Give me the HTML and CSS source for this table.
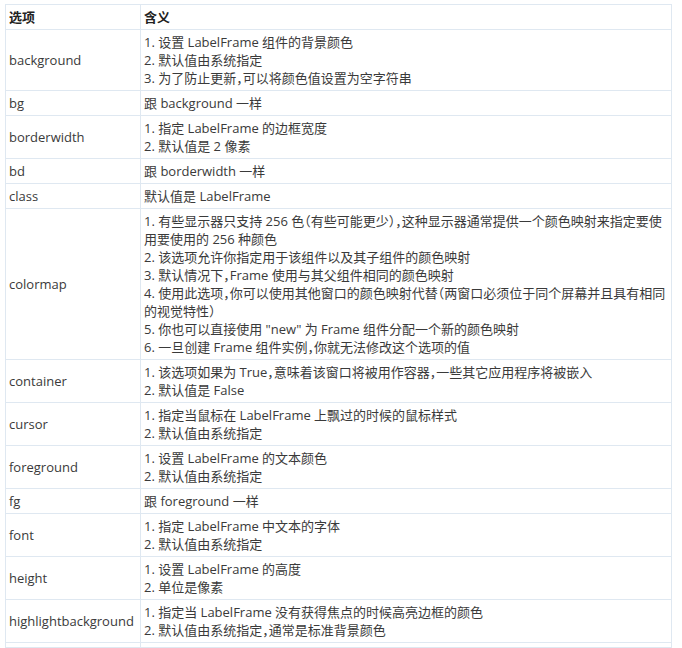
FILE: index.html
```html
<!DOCTYPE html>
<html lang="zh-CN">
<head>
<meta charset="utf-8">
<title>LabelFrame 选项</title>
<link rel="stylesheet" href="styles.css">
</head>
<body>
<div class="wrap">
<table class="opts">
  <thead>
    <tr><th class="c1">选项</th><th class="c2">含义</th></tr>
  </thead>
  <tbody>
    <tr><td>background</td><td>1. 设置 LabelFrame 组件的背景颜色<br>2. 默认值由系统指定<br>3. 为了防止更新，可以将颜色值设置为空字符串</td></tr>
    <tr><td>bg</td><td>跟 background 一样</td></tr>
    <tr><td>borderwidth</td><td>1. 指定 LabelFrame 的边框宽度<br>2. 默认值是 2 像素</td></tr>
    <tr><td>bd</td><td>跟 borderwidth 一样</td></tr>
    <tr><td>class</td><td>默认值是 LabelFrame</td></tr>
    <tr><td>colormap</td><td>1. 有些显示器只支持 256 色（有些可能更少），这种显示器通常提供一个颜色映射来指定要使<br>用要使用的 256 种颜色<br>2. 该选项允许你指定用于该组件以及其子组件的颜色映射<br>3. 默认情况下，Frame 使用与其父组件相同的颜色映射<br>4. 使用此选项，你可以使用其他窗口的颜色映射代替（两窗口必须位于同个屏幕并且具有相同<br>的视觉特性）<br>5. 你也可以直接使用 "new" 为 Frame 组件分配一个新的颜色映射<br>6. 一旦创建 Frame 组件实例，你就无法修改这个选项的值</td></tr>
    <tr><td>container</td><td>1. 该选项如果为 True，意味着该窗口将被用作容器，一些其它应用程序将被嵌入<br>2. 默认值是 False</td></tr>
    <tr><td>cursor</td><td>1. 指定当鼠标在 LabelFrame 上飘过的时候的鼠标样式<br>2. 默认值由系统指定</td></tr>
    <tr><td>foreground</td><td>1. 设置 LabelFrame 的文本颜色<br>2. 默认值由系统指定</td></tr>
    <tr><td>fg</td><td>跟 foreground 一样</td></tr>
    <tr><td>font</td><td>1. 指定 LabelFrame 中文本的字体<br>2. 默认值由系统指定</td></tr>
    <tr><td>height</td><td>1. 设置 LabelFrame 的高度<br>2. 单位是像素</td></tr>
    <tr><td>highlightbackground</td><td>1. 指定当 LabelFrame 没有获得焦点的时候高亮边框的颜色<br>2. 默认值由系统指定，通常是标准背景颜色</td></tr>
    <tr class="blank"><td></td><td></td></tr>
  </tbody>
</table>
</div>
</body>
</html>
```

FILE: styles.css
```css
html {
  overflow: hidden;
  background: #ffffff;
}
body {
  margin: 0;
  font-family: "Open Sans", "Noto Sans CJK SC", sans-serif;
  font-size: 13px;
  line-height: 18px;
  color: #3a3a3a;
  font-feature-settings: "halt" 1;
}
.wrap {
  padding: 4px 0 0 5px;
}
.opts {
  border-collapse: collapse;
  width: 667px;
  table-layout: fixed;
}
.opts th,
.opts td {
  border: 1px solid #dfe8f1;
  padding: 3px;
  text-align: left;
  vertical-align: middle;
  white-space: nowrap;
  overflow: hidden;
}
.opts th {
  font-weight: bold;
  color: #222222;
}
.opts .c1 {
  width: 128px;
}
.opts .blank td {
  height: 0;
  padding: 2px 3px;
}
```
